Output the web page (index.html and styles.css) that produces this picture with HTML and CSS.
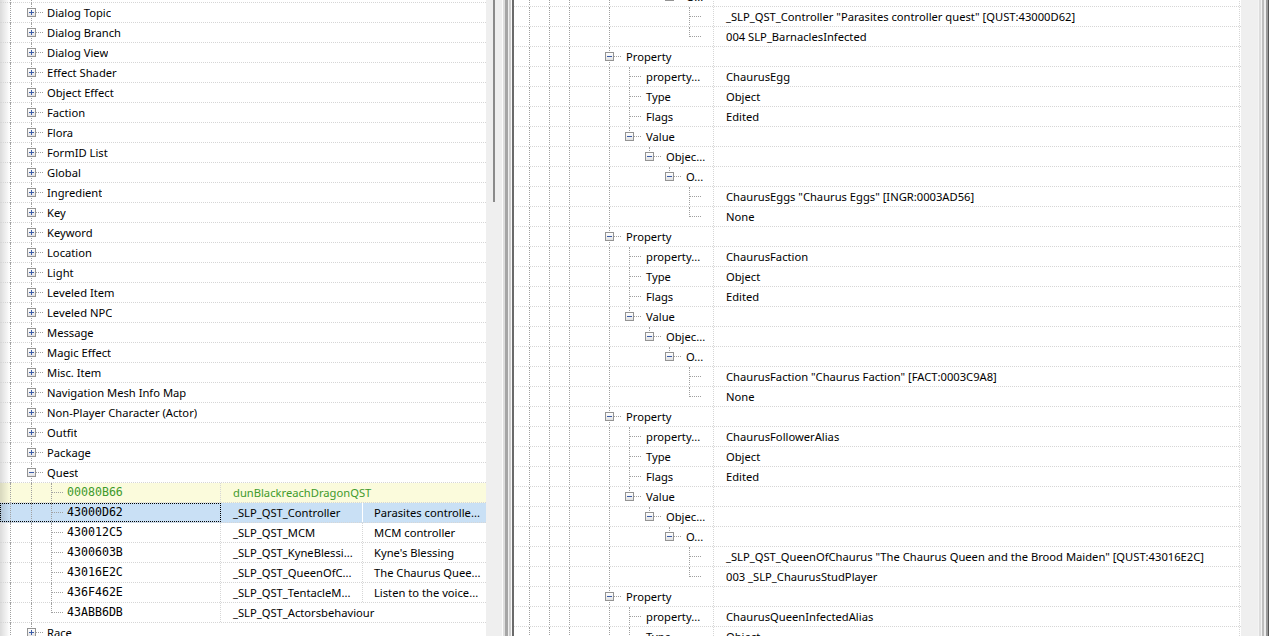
FILE: index.html
```html
<!DOCTYPE html>
<html lang="en">
<head>
  <meta charset="UTF-8">
  <title>Record tree</title>
  <link rel="stylesheet" href="styles.css">
</head>
<body>
  <div class="window">
    <!-- left: record tree -->
    <div class="ltree">
      <div class="rows lrows">
        <div class="row lrow"><span class="i root v"></span><span class="i t"><span class="b p"></span></span><span class="label"></span></div>
        <div class="row lrow"><span class="i root v"></span><span class="i t"><span class="b p"></span></span><span class="label">Dialog Topic</span></div>
        <div class="row lrow"><span class="i root v"></span><span class="i t"><span class="b p"></span></span><span class="label">Dialog Branch</span></div>
        <div class="row lrow"><span class="i root v"></span><span class="i t"><span class="b p"></span></span><span class="label">Dialog View</span></div>
        <div class="row lrow"><span class="i root v"></span><span class="i t"><span class="b p"></span></span><span class="label">Effect Shader</span></div>
        <div class="row lrow"><span class="i root v"></span><span class="i t"><span class="b p"></span></span><span class="label">Object Effect</span></div>
        <div class="row lrow"><span class="i root v"></span><span class="i t"><span class="b p"></span></span><span class="label">Faction</span></div>
        <div class="row lrow"><span class="i root v"></span><span class="i t"><span class="b p"></span></span><span class="label">Flora</span></div>
        <div class="row lrow"><span class="i root v"></span><span class="i t"><span class="b p"></span></span><span class="label">FormID List</span></div>
        <div class="row lrow"><span class="i root v"></span><span class="i t"><span class="b p"></span></span><span class="label">Global</span></div>
        <div class="row lrow"><span class="i root v"></span><span class="i t"><span class="b p"></span></span><span class="label">Ingredient</span></div>
        <div class="row lrow"><span class="i root v"></span><span class="i t"><span class="b p"></span></span><span class="label">Key</span></div>
        <div class="row lrow"><span class="i root v"></span><span class="i t"><span class="b p"></span></span><span class="label">Keyword</span></div>
        <div class="row lrow"><span class="i root v"></span><span class="i t"><span class="b p"></span></span><span class="label">Location</span></div>
        <div class="row lrow"><span class="i root v"></span><span class="i t"><span class="b p"></span></span><span class="label">Light</span></div>
        <div class="row lrow"><span class="i root v"></span><span class="i t"><span class="b p"></span></span><span class="label">Leveled Item</span></div>
        <div class="row lrow"><span class="i root v"></span><span class="i t"><span class="b p"></span></span><span class="label">Leveled NPC</span></div>
        <div class="row lrow"><span class="i root v"></span><span class="i t"><span class="b p"></span></span><span class="label">Message</span></div>
        <div class="row lrow"><span class="i root v"></span><span class="i t"><span class="b p"></span></span><span class="label">Magic Effect</span></div>
        <div class="row lrow"><span class="i root v"></span><span class="i t"><span class="b p"></span></span><span class="label">Misc. Item</span></div>
        <div class="row lrow"><span class="i root v"></span><span class="i t"><span class="b p"></span></span><span class="label">Navigation Mesh Info Map</span></div>
        <div class="row lrow"><span class="i root v"></span><span class="i t"><span class="b p"></span></span><span class="label">Non-Player Character (Actor)</span></div>
        <div class="row lrow"><span class="i root v"></span><span class="i t"><span class="b p"></span></span><span class="label">Outfit</span></div>
        <div class="row lrow"><span class="i root v"></span><span class="i t"><span class="b p"></span></span><span class="label">Package</span></div>
        <div class="row lrow"><span class="i root v"></span><span class="i t"><span class="b m"></span></span><span class="label">Quest</span></div>

        <div class="row lrow rec hl">
          <div class="c1"><span class="i root v"></span><span class="i v"></span><span class="i t"></span><span class="fid">00080B66</span></div>
          <div class="c2 wide">dunBlackreachDragonQST</div>
        </div>
        <div class="row lrow rec sel">
          <div class="c1"><span class="i root v"></span><span class="i v"></span><span class="i t"></span><span class="fid">43000D62</span></div>
          <div class="c2">_SLP_QST_Controller</div>
          <div class="c3">Parasites controlle...</div>
        </div>
        <div class="row lrow rec">
          <div class="c1"><span class="i root v"></span><span class="i v"></span><span class="i t"></span><span class="fid">430012C5</span></div>
          <div class="c2">_SLP_QST_MCM</div>
          <div class="c3">MCM controller</div>
        </div>
        <div class="row lrow rec">
          <div class="c1"><span class="i root v"></span><span class="i v"></span><span class="i t"></span><span class="fid">4300603B</span></div>
          <div class="c2">_SLP_QST_KyneBlessi...</div>
          <div class="c3">Kyne's Blessing</div>
        </div>
        <div class="row lrow rec">
          <div class="c1"><span class="i root v"></span><span class="i v"></span><span class="i t"></span><span class="fid">43016E2C</span></div>
          <div class="c2">_SLP_QST_QueenOfC...</div>
          <div class="c3">The Chaurus Quee...</div>
        </div>
        <div class="row lrow rec">
          <div class="c1"><span class="i root v"></span><span class="i v"></span><span class="i t"></span><span class="fid">436F462E</span></div>
          <div class="c2">_SLP_QST_TentacleM...</div>
          <div class="c3">Listen to the voice...</div>
        </div>
        <div class="row lrow rec">
          <div class="c1"><span class="i root v"></span><span class="i v"></span><span class="i l"></span><span class="fid">43ABB6DB</span></div>
          <div class="c2 wide">_SLP_QST_Actorsbehaviour</div>
        </div>
        <div class="row lrow"><span class="i root v"></span><span class="i t"><span class="b p"></span></span><span class="label">Race</span></div>
      </div>
    </div>
    <div class="vscroll thin"><div class="thumb"></div></div>

    <div class="splitter"></div>

    <!-- right: record view -->
    <div class="rtree">
      <div class="rows rrows">
        <div class="row"><div class="name"><span class="i v"></span><span class="i v"></span><span class="i v"></span><span class="i"></span><span class="i v"></span><span class="i"></span><span class="i"></span><span class="i l"><span class="b m"></span></span><span class="label">O...</span></div><div class="val"></div></div>
        <div class="row"><div class="name"><span class="i v"></span><span class="i v"></span><span class="i v"></span><span class="i"></span><span class="i v"></span><span class="i"></span><span class="i"></span><span class="i"></span><span class="i t"></span></div><div class="val">_SLP_QST_Controller "Parasites controller quest" [QUST:43000D62]</div></div>
        <div class="row"><div class="name"><span class="i v"></span><span class="i v"></span><span class="i v"></span><span class="i"></span><span class="i v"></span><span class="i"></span><span class="i"></span><span class="i"></span><span class="i l"></span></div><div class="val">004 SLP_BarnaclesInfected</div></div>

        <div class="row"><div class="name"><span class="i v"></span><span class="i v"></span><span class="i v"></span><span class="i"></span><span class="i t"><span class="b m"></span></span><span class="label">Property</span></div><div class="val"></div></div>
        <div class="row"><div class="name"><span class="i v"></span><span class="i v"></span><span class="i v"></span><span class="i"></span><span class="i v"></span><span class="i t"></span><span class="label">property...</span></div><div class="val">ChaurusEgg</div></div>
        <div class="row"><div class="name"><span class="i v"></span><span class="i v"></span><span class="i v"></span><span class="i"></span><span class="i v"></span><span class="i t"></span><span class="label">Type</span></div><div class="val">Object</div></div>
        <div class="row"><div class="name"><span class="i v"></span><span class="i v"></span><span class="i v"></span><span class="i"></span><span class="i v"></span><span class="i t"></span><span class="label">Flags</span></div><div class="val">Edited</div></div>
        <div class="row"><div class="name"><span class="i v"></span><span class="i v"></span><span class="i v"></span><span class="i"></span><span class="i v"></span><span class="i l"><span class="b m"></span></span><span class="label">Value</span></div><div class="val"></div></div>
        <div class="row"><div class="name"><span class="i v"></span><span class="i v"></span><span class="i v"></span><span class="i"></span><span class="i v"></span><span class="i"></span><span class="i l"><span class="b m"></span></span><span class="label">Objec...</span></div><div class="val"></div></div>
        <div class="row"><div class="name"><span class="i v"></span><span class="i v"></span><span class="i v"></span><span class="i"></span><span class="i v"></span><span class="i"></span><span class="i"></span><span class="i l"><span class="b m"></span></span><span class="label">O...</span></div><div class="val"></div></div>
        <div class="row"><div class="name"><span class="i v"></span><span class="i v"></span><span class="i v"></span><span class="i"></span><span class="i v"></span><span class="i"></span><span class="i"></span><span class="i"></span><span class="i t"></span></div><div class="val">ChaurusEggs "Chaurus Eggs" [INGR:0003AD56]</div></div>
        <div class="row"><div class="name"><span class="i v"></span><span class="i v"></span><span class="i v"></span><span class="i"></span><span class="i v"></span><span class="i"></span><span class="i"></span><span class="i"></span><span class="i l"></span></div><div class="val">None</div></div>

        <div class="row"><div class="name"><span class="i v"></span><span class="i v"></span><span class="i v"></span><span class="i"></span><span class="i t"><span class="b m"></span></span><span class="label">Property</span></div><div class="val"></div></div>
        <div class="row"><div class="name"><span class="i v"></span><span class="i v"></span><span class="i v"></span><span class="i"></span><span class="i v"></span><span class="i t"></span><span class="label">property...</span></div><div class="val">ChaurusFaction</div></div>
        <div class="row"><div class="name"><span class="i v"></span><span class="i v"></span><span class="i v"></span><span class="i"></span><span class="i v"></span><span class="i t"></span><span class="label">Type</span></div><div class="val">Object</div></div>
        <div class="row"><div class="name"><span class="i v"></span><span class="i v"></span><span class="i v"></span><span class="i"></span><span class="i v"></span><span class="i t"></span><span class="label">Flags</span></div><div class="val">Edited</div></div>
        <div class="row"><div class="name"><span class="i v"></span><span class="i v"></span><span class="i v"></span><span class="i"></span><span class="i v"></span><span class="i l"><span class="b m"></span></span><span class="label">Value</span></div><div class="val"></div></div>
        <div class="row"><div class="name"><span class="i v"></span><span class="i v"></span><span class="i v"></span><span class="i"></span><span class="i v"></span><span class="i"></span><span class="i l"><span class="b m"></span></span><span class="label">Objec...</span></div><div class="val"></div></div>
        <div class="row"><div class="name"><span class="i v"></span><span class="i v"></span><span class="i v"></span><span class="i"></span><span class="i v"></span><span class="i"></span><span class="i"></span><span class="i l"><span class="b m"></span></span><span class="label">O...</span></div><div class="val"></div></div>
        <div class="row"><div class="name"><span class="i v"></span><span class="i v"></span><span class="i v"></span><span class="i"></span><span class="i v"></span><span class="i"></span><span class="i"></span><span class="i"></span><span class="i t"></span></div><div class="val">ChaurusFaction "Chaurus Faction" [FACT:0003C9A8]</div></div>
        <div class="row"><div class="name"><span class="i v"></span><span class="i v"></span><span class="i v"></span><span class="i"></span><span class="i v"></span><span class="i"></span><span class="i"></span><span class="i"></span><span class="i l"></span></div><div class="val">None</div></div>

        <div class="row"><div class="name"><span class="i v"></span><span class="i v"></span><span class="i v"></span><span class="i"></span><span class="i t"><span class="b m"></span></span><span class="label">Property</span></div><div class="val"></div></div>
        <div class="row"><div class="name"><span class="i v"></span><span class="i v"></span><span class="i v"></span><span class="i"></span><span class="i v"></span><span class="i t"></span><span class="label">property...</span></div><div class="val">ChaurusFollowerAlias</div></div>
        <div class="row"><div class="name"><span class="i v"></span><span class="i v"></span><span class="i v"></span><span class="i"></span><span class="i v"></span><span class="i t"></span><span class="label">Type</span></div><div class="val">Object</div></div>
        <div class="row"><div class="name"><span class="i v"></span><span class="i v"></span><span class="i v"></span><span class="i"></span><span class="i v"></span><span class="i t"></span><span class="label">Flags</span></div><div class="val">Edited</div></div>
        <div class="row"><div class="name"><span class="i v"></span><span class="i v"></span><span class="i v"></span><span class="i"></span><span class="i v"></span><span class="i l"><span class="b m"></span></span><span class="label">Value</span></div><div class="val"></div></div>
        <div class="row"><div class="name"><span class="i v"></span><span class="i v"></span><span class="i v"></span><span class="i"></span><span class="i v"></span><span class="i"></span><span class="i l"><span class="b m"></span></span><span class="label">Objec...</span></div><div class="val"></div></div>
        <div class="row"><div class="name"><span class="i v"></span><span class="i v"></span><span class="i v"></span><span class="i"></span><span class="i v"></span><span class="i"></span><span class="i"></span><span class="i l"><span class="b m"></span></span><span class="label">O...</span></div><div class="val"></div></div>
        <div class="row"><div class="name"><span class="i v"></span><span class="i v"></span><span class="i v"></span><span class="i"></span><span class="i v"></span><span class="i"></span><span class="i"></span><span class="i"></span><span class="i t"></span></div><div class="val">_SLP_QST_QueenOfChaurus "The Chaurus Queen and the Brood Maiden" [QUST:43016E2C]</div></div>
        <div class="row"><div class="name"><span class="i v"></span><span class="i v"></span><span class="i v"></span><span class="i"></span><span class="i v"></span><span class="i"></span><span class="i"></span><span class="i"></span><span class="i l"></span></div><div class="val">003 _SLP_ChaurusStudPlayer</div></div>

        <div class="row"><div class="name"><span class="i v"></span><span class="i v"></span><span class="i v"></span><span class="i"></span><span class="i t"><span class="b m"></span></span><span class="label">Property</span></div><div class="val"></div></div>
        <div class="row"><div class="name"><span class="i v"></span><span class="i v"></span><span class="i v"></span><span class="i"></span><span class="i v"></span><span class="i t"></span><span class="label">property...</span></div><div class="val">ChaurusQueenInfectedAlias</div></div>
        <div class="row"><div class="name"><span class="i v"></span><span class="i v"></span><span class="i v"></span><span class="i"></span><span class="i v"></span><span class="i t"></span><span class="label">Type</span></div><div class="val">Object</div></div>
      </div>
    </div>
    <div class="vscroll wide"></div>
    <div class="edge"></div>
  </div>
</body>
</html>
```

FILE: styles.css
```css
body {
  margin: 0;
  font-family: "Noto Sans", "Liberation Sans", sans-serif;
  font-size: 11.2px;
  color: #000;
  background: #fff;
  overflow: hidden;
}
.window {
  display: flex;
  height: 636px;
  overflow: hidden;
}

/* tree panes */
.ltree { width: 486px; flex: none; overflow: hidden; }
.rtree { width: 727px; flex: none; overflow: hidden; }
.lrows { margin-top: -17px; }
.rrows { margin-top: -13px; }

.row {
  display: flex;
  height: 20px;
  box-sizing: border-box;
  border-bottom: 1px dotted #d6d6d6;
  line-height: 19px;
  white-space: nowrap;
}
.label { padding-left: 6px; overflow: hidden; }
.rrows .label { padding-left: 7px; }

/* left pane rows */
.lrow {
  background-image: linear-gradient(to right, rgba(0,0,0,0.14), rgba(0,0,0,0) 10px);
}
.lrow.hl { background-color: #fbfbdc; }
.lrow.sel { background-color: #c9e0f5; }
.rec .c1 {
  display: flex;
  width: 221px;
  flex: none;
  box-sizing: border-box;
  border-right: 1px dotted #d6d6d6;
}
.rec .c2 {
  width: 142px;
  flex: none;
  box-sizing: border-box;
  padding-left: 12px;
  border-right: 1px dotted #d6d6d6;
  overflow: hidden;
}
.rec .c2.wide { width: auto; flex: 1; border-right: none; }
.rec .c3 { flex: 1; padding-left: 11px; overflow: hidden; }
.fid {
  padding-left: 6px;
  font-family: "DejaVu Sans Mono", "Liberation Mono", monospace;
  font-size: 11.6px;
}
.hl .fid, .hl .c2 { color: #3d9a2b; }
.sel .c1 { outline: 1px dotted #000; outline-offset: -1px; }
.sel .c2 { border-right: 1px solid #fff; }

/* right pane rows */
.rrows .name {
  display: flex;
  width: 200px;
  flex: none;
  box-sizing: border-box;
  padding-left: 5px;
  border-right: 1px dotted #d6d6d6;
  overflow: hidden;
}
.rrows .val {
  width: 526px;
  flex: none;
  box-sizing: border-box;
  padding-left: 12px;
  border-right: 1px dotted #d6d6d6;
  overflow: hidden;
}

/* tree guide lines */
.i { position: relative; width: 20px; height: 19px; flex: none; }
.i.root { width: 21px; }
.i.v::before, .i.t::before, .i.l::before {
  content: "";
  position: absolute;
  left: 10px;
  top: 0;
  bottom: -1px;
  border-left: 1px dotted #a0a0a0;
}
.i.l::before { bottom: auto; height: 10px; }
.i.t::after, .i.l::after {
  content: "";
  position: absolute;
  left: 11px;
  top: 9px;
  width: 11px;
  border-top: 1px dotted #a0a0a0;
}

/* expand / collapse boxes */
.b {
  position: absolute;
  left: 6px;
  top: 5px;
  width: 9px;
  height: 9px;
  box-sizing: border-box;
  border: 1px solid #939393;
  background: linear-gradient(#ffffff, #e2e2e2);
  z-index: 1;
}
.b::before {
  content: "";
  position: absolute;
  left: 1px;
  top: 3px;
  width: 5px;
  height: 1px;
  background: #3b5ca8;
}
.b.p::after {
  content: "";
  position: absolute;
  left: 3px;
  top: 1px;
  width: 1px;
  height: 5px;
  background: #3b5ca8;
}

/* scrollbars and frame */
.vscroll { flex: none; background: #efefef; }
.vscroll.thin { width: 16px; }
.vscroll.wide { width: 17px; }
.thumb { margin-left: 7px; width: 2px; height: 202px; background: #8b8b8b; }
.splitter {
  width: 12px;
  flex: none;
  background: linear-gradient(to right, #fcfcfc 0 1px, #dedede 1px 3px, #a6a6a6 3px 6px, #efefef 6px 7px, #cfcfcf 7px 9px, #fafafa 9px 10px, #6a6a6a 10px 12px);
}
.edge {
  width: 11px;
  flex: none;
  background: linear-gradient(to right, #f4f4f4 0 1px, #dcdcdc 1px 3px, #f2f2f2 3px 4px, #bdbdbd 4px 6px, #ededed 6px 8px, #9a9a9a 8px 10px, #555 10px 11px);
}
```
